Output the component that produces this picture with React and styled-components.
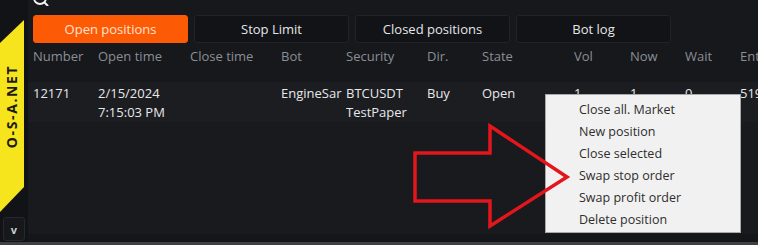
import React from "react";
import styled, { createGlobalStyle } from "styled-components";

const Global = createGlobalStyle`
  html, body { margin: 0; padding: 0; background: #131519; }
  body { width: 758px; height: 245px; overflow: hidden; font-family: "Open Sans", "Noto Sans", sans-serif; }
  * { box-sizing: border-box; }
`;

const Root = styled.div`
  position: relative;
  width: 758px;
  height: 245px;
  display: grid;
  grid-template-columns: 28px 1fr;
  grid-template-rows: 1fr 3px;
  background: #131519;
  overflow: hidden;
`;

const Side = styled.div`
  display: flex;
  flex-direction: column;
  padding-top: 20px;
  background: #111316;
`;

const Brand = styled.div`
  width: 24px;
  height: 192px;
  background: #f6e41c;
  clip-path: polygon(0 23px, 24px 0, 24px 167px, 0 192px);
  display: flex;
  align-items: center;
  justify-content: center;
`;

const BrandText = styled.span`
  transform: rotate(-90deg);
  white-space: nowrap;
  font-family: "Open Sans", sans-serif;
  font-weight: 700;
  font-size: 14px;
  letter-spacing: 1.6px;
  color: #1b1b14;
  margin-top: -20px;
`;

const Expand = styled.div`
  margin: 5px 0 0 3px;
  width: 22px;
  height: 24px;
  border: 1px solid #25282d;
  border-radius: 3px;
  background: #16181c;
  color: #c9cbd0;
  font-size: 11px;
  font-weight: 700;
  display: flex;
  align-items: center;
  justify-content: center;
`;

const Main = styled.div`
  display: flex;
  flex-direction: column;
  background: #16181c;
  min-width: 0;
`;

const IconRow = styled.div`
  height: 15px;
  padding-left: 4px;
  display: flex;
  align-items: flex-start;
`;

const Tabs = styled.div`
  display: flex;
  gap: 6px;
  padding-left: 5px;
`;

const Tab = styled.div`
  width: 155px;
  height: 28px;
  border-radius: 3px;
  display: flex;
  align-items: center;
  justify-content: center;
  font-size: 13px;
  background: ${(p) => (p.$active ? "#fd5a05" : "#111317")};
  border: 1px solid ${(p) => (p.$active ? "#fd5a05" : "#212328")};
  color: ${(p) => (p.$active ? "#ffe2d2" : "#e6e6e8")};
`;

const cols = "65px 92px 91px 65px 81px 55px 92px 56px 55px 55px 1fr";

const Row = styled.div`
  display: grid;
  grid-template-columns: ${cols};
  padding-left: 5px;
  font-size: 13px;
  line-height: 19px;
`;

const Head = styled(Row)`
  margin-top: 1px;
  height: 24px;
  align-items: center;
  color: #8b8e94;
`;

const Data = styled(Row)`
  margin-top: 14px;
  height: 40px;
  padding-top: 2px;
  background: #1b1d21;
  color: #e8e8ea;
`;

const Cell = styled.div`
  white-space: nowrap;
  overflow: hidden;
`;

const Body = styled.div`
  flex: 1;
  background: #181a1e;
  border-bottom: 8px solid #141619;
`;

const Footer = styled.div`
  grid-column: 1 / 3;
  background: #3e4045;
`;

const Menu = styled.div`
  position: absolute;
  left: 545px;
  top: 94px;
  width: 196px;
  height: 139px;
  background: #f1f1f1;
  border: 1px solid #a9a9a9;
  padding-top: 4px;
  font-family: "Open Sans", sans-serif;
  font-size: 12.5px;
  color: #2e2e2e;
`;

const MenuItem = styled.div`
  height: 22px;
  line-height: 22px;
  padding-left: 33px;
  white-space: nowrap;
`;

const Arrow = styled.svg`
  position: absolute;
  left: 405px;
  top: 118px;
  overflow: visible;
`;

const headers = ["Number", "Open time", "Close time", "Bot", "Security", "Dir.", "State", "Vol", "Now", "Wait", "Ent"];
const menu = ["Close all. Market", "New position", "Close selected", "Swap stop order", "Swap profit order", "Delete position"];

export default function App() {
  return (
    <>
      <Global />
      <Root>
        <Side>
          <Brand>
            <BrandText>O-S-A.NET</BrandText>
          </Brand>
          <Expand>v</Expand>
        </Side>
        <Main>
          <IconRow>
            <svg width="18" height="6" viewBox="0 9 18 6">
              <circle cx="8" cy="7" r="6" fill="none" stroke="#f2f2f2" strokeWidth="1.8" />
              <line x1="12.5" y1="11.5" x2="15.5" y2="14.5" stroke="#f2f2f2" strokeWidth="2" strokeLinecap="round" />
            </svg>
          </IconRow>
          <Tabs>
            <Tab $active>Open positions</Tab>
            <Tab>Stop Limit</Tab>
            <Tab>Closed positions</Tab>
            <Tab>Bot log</Tab>
          </Tabs>
          <Head>
            {headers.map((h) => (
              <Cell key={h}>{h}</Cell>
            ))}
          </Head>
          <Data>
            <Cell>12171</Cell>
            <Cell>
              2/15/2024
              <br />
              7:15:03 PM
            </Cell>
            <Cell></Cell>
            <Cell>EngineSar</Cell>
            <Cell>
              BTCUSDT
              <br />
              TestPaper
            </Cell>
            <Cell>Buy</Cell>
            <Cell>Open</Cell>
            <Cell>1</Cell>
            <Cell>1</Cell>
            <Cell>0</Cell>
            <Cell>519</Cell>
          </Data>
          <Body />
        </Main>
        <Footer />
        <Menu>
          {menu.map((m) => (
            <MenuItem key={m}>{m}</MenuItem>
          ))}
        </Menu>
        <Arrow width="170" height="115" viewBox="0 0 170 115">
          <polygon
            points="10,35 85,35 85,8 162,59 85,108 85,83 10,83"
            fill="none"
            stroke="#e3161c"
            strokeWidth="3.5"
            strokeLinejoin="miter"
          />
        </Arrow>
      </Root>
    </>
  );
}
